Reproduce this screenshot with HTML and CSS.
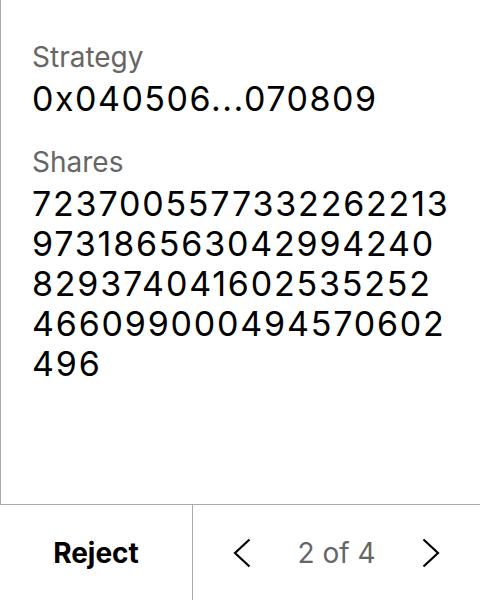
FILE: index.html
```html
<!DOCTYPE html>
<html>
<head>
<meta charset="utf-8">
<link rel="stylesheet" href="styles.css">
</head>
<body>
<div class="screen">
  <div class="content">
    <div class="field">
      <div class="label">Strategy</div>
      <div class="value">0x040506...070809</div>
    </div>
    <div class="field">
      <div class="label">Shares</div>
      <div class="value number">7237005577332262213<br>973186563042994240<br>829374041602535252<br>466099000494570602<br>496</div>
    </div>
  </div>
  <div class="footer">
    <div class="reject">Reject</div>
    <div class="pager">
      <svg class="chev" width="18" height="30" viewBox="0 0 18 30"><path d="M16.5 1.5 L2 15 L16.5 28.5" fill="none" stroke="#000" stroke-width="2.2"/></svg>
      <span class="count">2 of 4</span>
      <svg class="chev" width="18" height="30" viewBox="0 0 18 30"><path d="M1.5 1.5 L16 15 L1.5 28.5" fill="none" stroke="#000" stroke-width="2.2"/></svg>
    </div>
  </div>
</div>
</body>
</html>
```
FILE: styles.css
```css
* { box-sizing: border-box; }
html, body { margin: 0; padding: 0; background: #fff; }
body { font-family: Inter, "Noto Sans", sans-serif; color: #000; }
.screen { width: 480px; height: 600px; display: flex; flex-direction: column; }
.content {
  height: 505px;
  border-left: 1px solid #aaa;
  border-bottom: 1px solid #aaa;
  padding: 40px 8px 0 31px;
  display: flex;
  flex-direction: column;
  gap: 26px;
}
.field { display: flex; flex-direction: column; gap: 5px; }
.label { font-size: 28px; line-height: 34px; color: #666; }
.value { font-size: 34px; line-height: 40px; color: #000; letter-spacing: 1.5px; }
.number { letter-spacing: 1.8px; white-space: nowrap; }
.footer { flex: 1; display: flex; }
.reject {
  width: 193px;
  border-right: 1px solid #aaa;
  display: flex; align-items: center; justify-content: center;
  font-size: 28px; font-weight: 700;
}
.pager {
  flex: 1;
  display: flex; align-items: center; justify-content: center;
  gap: 46px;
}
.count { font-size: 28px; color: #666; }
.chev { display: block; }
```
